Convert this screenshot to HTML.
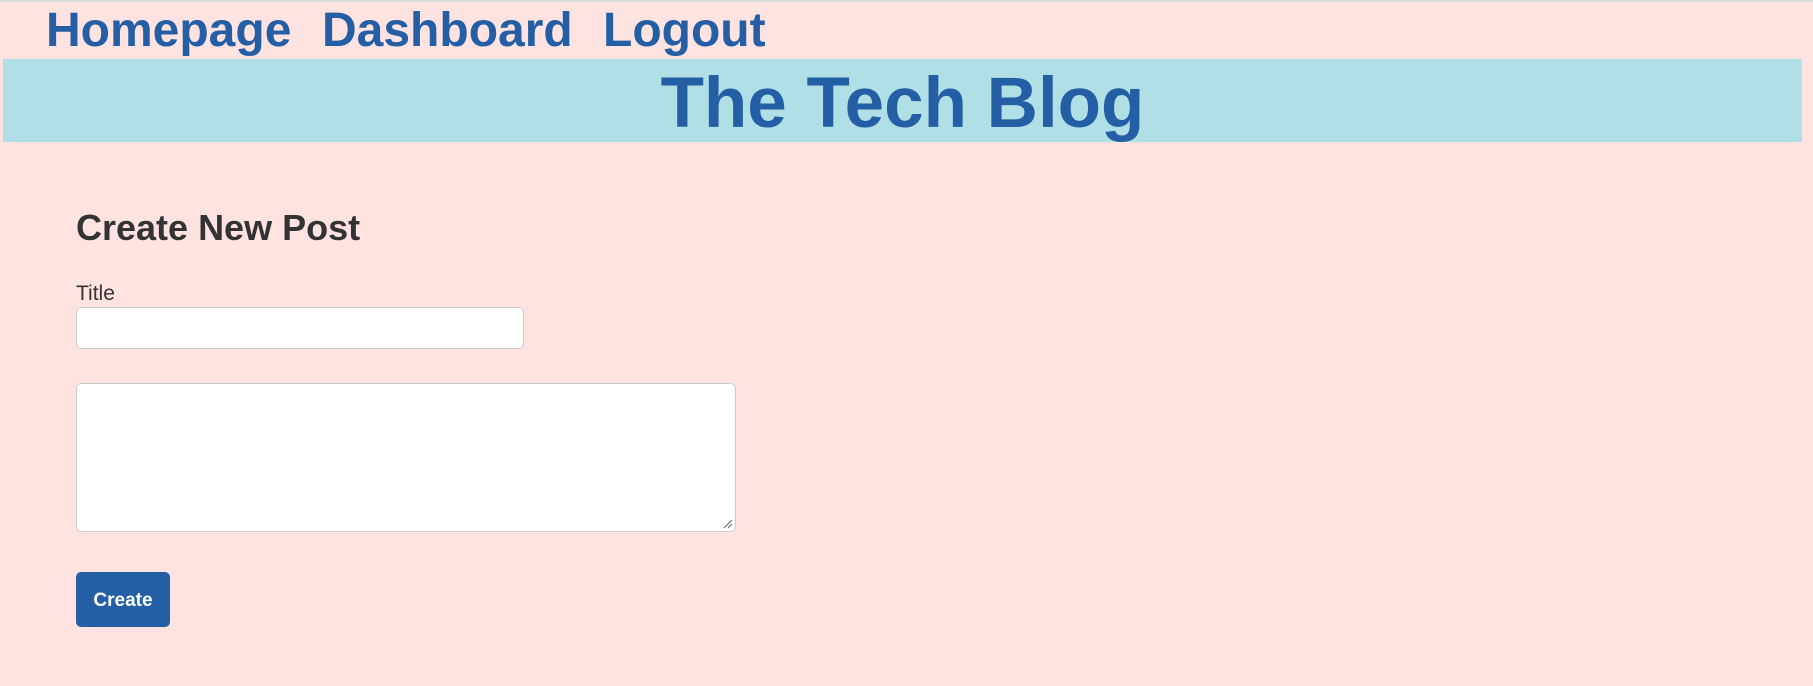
<!DOCTYPE html>
<html><head><style>
html,body{margin:0;padding:0;width:1813px;height:686px;overflow:hidden;background:#ffe3e1;font-family:"Liberation Sans",Arial,sans-serif;position:relative}
.topline{position:absolute;left:0;top:0;width:1813px;height:2px;background:#dcdcdc}
.nav{position:absolute;top:1px;font-size:48px;font-weight:bold;color:#245ea5;line-height:60px;white-space:nowrap}
.band{position:absolute;left:3px;top:59px;width:1799px;height:83px;background:#b0dfe5}
.band h1{margin:0;text-align:center;font-size:71px;line-height:83px;color:#245ea5;font-weight:bold;position:relative;top:3px}
.h2{position:absolute;left:76px;top:208px;font-size:36px;font-weight:bold;color:#333;line-height:40px;white-space:nowrap}
.lbl{position:absolute;left:76px;top:282px;font-size:21px;color:#333;line-height:24px}
.inp{position:absolute;left:76px;top:307px;width:446px;height:40px;background:#fff;border:1px solid #ccc;border-radius:5px}
.ta{position:absolute;left:76px;top:383px;width:658px;height:147px;background:#fff;border:1px solid #ccc;border-radius:5px}
.btn{position:absolute;left:76px;top:572px;width:94px;height:55px;background:#245ea5;border-radius:5px;color:#fff;font-weight:bold;font-size:19px;line-height:57px;text-align:center}
</style></head><body>
<div class="topline"></div>
<div class="nav" style="left:46px">Homepage</div>
<div class="nav" style="left:322px">Dashboard</div>
<div class="nav" style="left:603px">Logout</div>
<div class="band"><h1>The Tech Blog</h1></div>
<div class="h2">Create New Post</div>
<div class="lbl">Title</div>
<div class="inp"></div>
<div class="ta"><svg style="position:absolute;right:2px;bottom:2px" width="12" height="12"><path d="M11 3L3 11M11 7L7 11" stroke="#666" stroke-width="1"/></svg></div>
<div class="btn">Create</div>
</body></html>
